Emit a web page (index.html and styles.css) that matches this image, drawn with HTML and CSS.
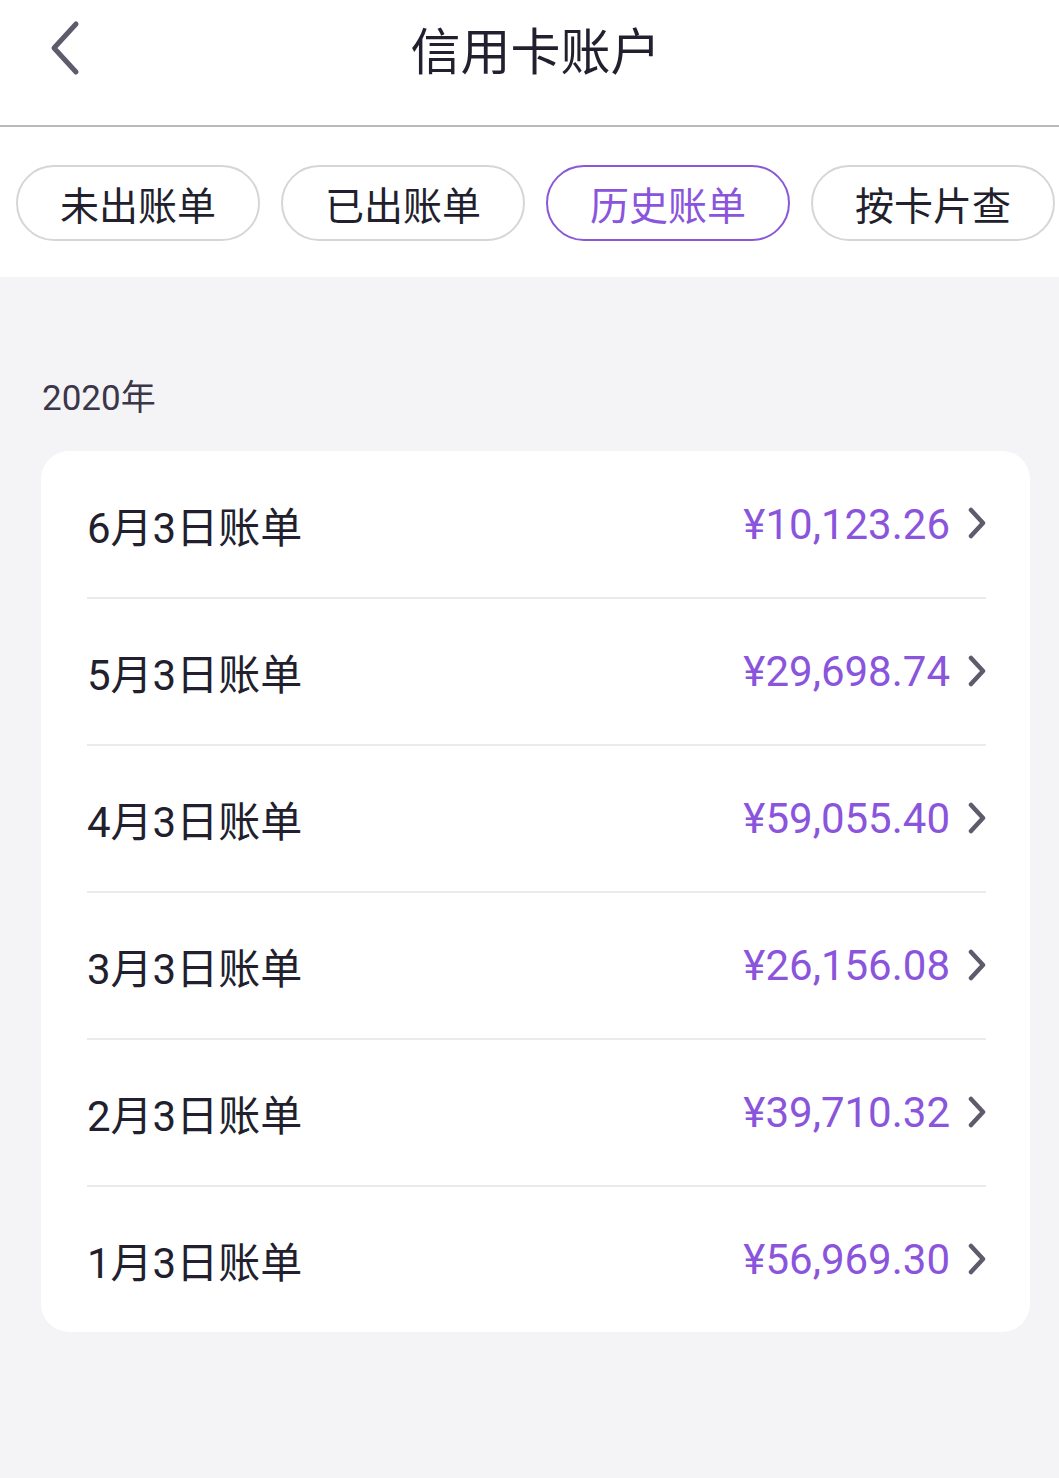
FILE: index.html
```html
<!DOCTYPE html>
<html lang="zh-CN">
<head>
    <meta charset="UTF-8">
    <meta name="viewport" content="width=device-width, initial-scale=1.0">
    <title>信用卡账户</title>
    <link rel="stylesheet" href="styles.css">
</head>
<body>
    <!-- 顶部导航 -->
    <header class="topbar">
        <a class="back" href="#">
            <svg width="36" height="56" viewBox="0 0 36 56">
                <path d="M30 4 L8 28 L30 52" fill="none" stroke="#5f5a6c" stroke-width="5" stroke-linecap="round" stroke-linejoin="round"/>
            </svg>
        </a>
        <h1>信用卡账户</h1>
    </header>

    <!-- 账单类型 -->
    <nav class="tabs">
        <button class="tab">未出账单</button>
        <button class="tab">已出账单</button>
        <button class="tab active">历史账单</button>
        <button class="tab">按卡片查</button>
    </nav>

    <main class="content">
        <div class="year">2020年</div>
        <ul class="bills">
            <li class="bill"><span class="name">6月3日账单</span><span class="amount">¥10,123.26</span><svg class="arrow" width="20" height="32" viewBox="0 0 20 32"><path d="M4 3 L16 16 L4 29" /></svg></li>
            <li class="bill"><span class="name">5月3日账单</span><span class="amount">¥29,698.74</span><svg class="arrow" width="20" height="32" viewBox="0 0 20 32"><path d="M4 3 L16 16 L4 29" /></svg></li>
            <li class="bill"><span class="name">4月3日账单</span><span class="amount">¥59,055.40</span><svg class="arrow" width="20" height="32" viewBox="0 0 20 32"><path d="M4 3 L16 16 L4 29" /></svg></li>
            <li class="bill"><span class="name">3月3日账单</span><span class="amount">¥26,156.08</span><svg class="arrow" width="20" height="32" viewBox="0 0 20 32"><path d="M4 3 L16 16 L4 29" /></svg></li>
            <li class="bill"><span class="name">2月3日账单</span><span class="amount">¥39,710.32</span><svg class="arrow" width="20" height="32" viewBox="0 0 20 32"><path d="M4 3 L16 16 L4 29" /></svg></li>
            <li class="bill"><span class="name">1月3日账单</span><span class="amount">¥56,969.30</span><svg class="arrow" width="20" height="32" viewBox="0 0 20 32"><path d="M4 3 L16 16 L4 29" /></svg></li>
        </ul>
    </main>
</body>
</html>
```

FILE: styles.css
```css
* {
    margin: 0;
    padding: 0;
    box-sizing: border-box;
}

body {
    background-color: #f4f4f6;
    color: #221f2e;
    font-family: Roboto, "Noto Sans CJK SC", sans-serif;
}

.topbar {
    position: relative;
    height: 127px;
    background-color: #fff;
    border-bottom: 2px solid #b9b9bb;
    display: flex;
    align-items: center;
    justify-content: center;
}

.back {
    position: absolute;
    left: 46px;
    top: 20px;
}

.topbar h1 {
    font-size: 50px;
    font-weight: 400;
    color: #221f2e;
    margin-top: -30px;
    padding-left: 12px;
}

.tabs {
    background-color: #fff;
    height: 150px;
    display: flex;
    gap: 21px;
    padding: 38px 3px 0 16px;
}

.tab {
    width: 244px;
    height: 76px;
    border: 2px solid #d6d6d8;
    border-radius: 38px;
    background: #fff;
    font-family: "Noto Sans CJK SC", sans-serif;
    font-size: 39px;
    color: #221f2e;
    flex-shrink: 0;
}

.tab.active {
    border-color: #8a58d6;
    color: #8a55dc;
}

.content {
    padding: 92px 29px 0 41px;
}

.year {
    font-size: 35px;
    color: #3b3649;
    padding-left: 1px;
    height: 82px;
}

.bills {
    list-style: none;
    background-color: #fff;
    border-radius: 28px;
    padding: 0 44px 0 46px;
}

.bill {
    height: 147px;
    display: flex;
    align-items: center;
    border-top: 2px solid #ebebed;
}

.bill:first-child {
    border-top: none;
    height: 146px;
}

.name {
    flex: 1;
    font-size: 42px;
    color: #221f2e;
}

.amount {
    font-size: 42px;
    color: #8a55dc;
}

.arrow {
    margin-left: 17px;
    margin-right: -1px;
    margin-top: -2px;
}

.arrow path {
    fill: none;
    stroke: #5f5a6c;
    stroke-width: 4.5;
    stroke-linecap: round;
    stroke-linejoin: round;
}
```
